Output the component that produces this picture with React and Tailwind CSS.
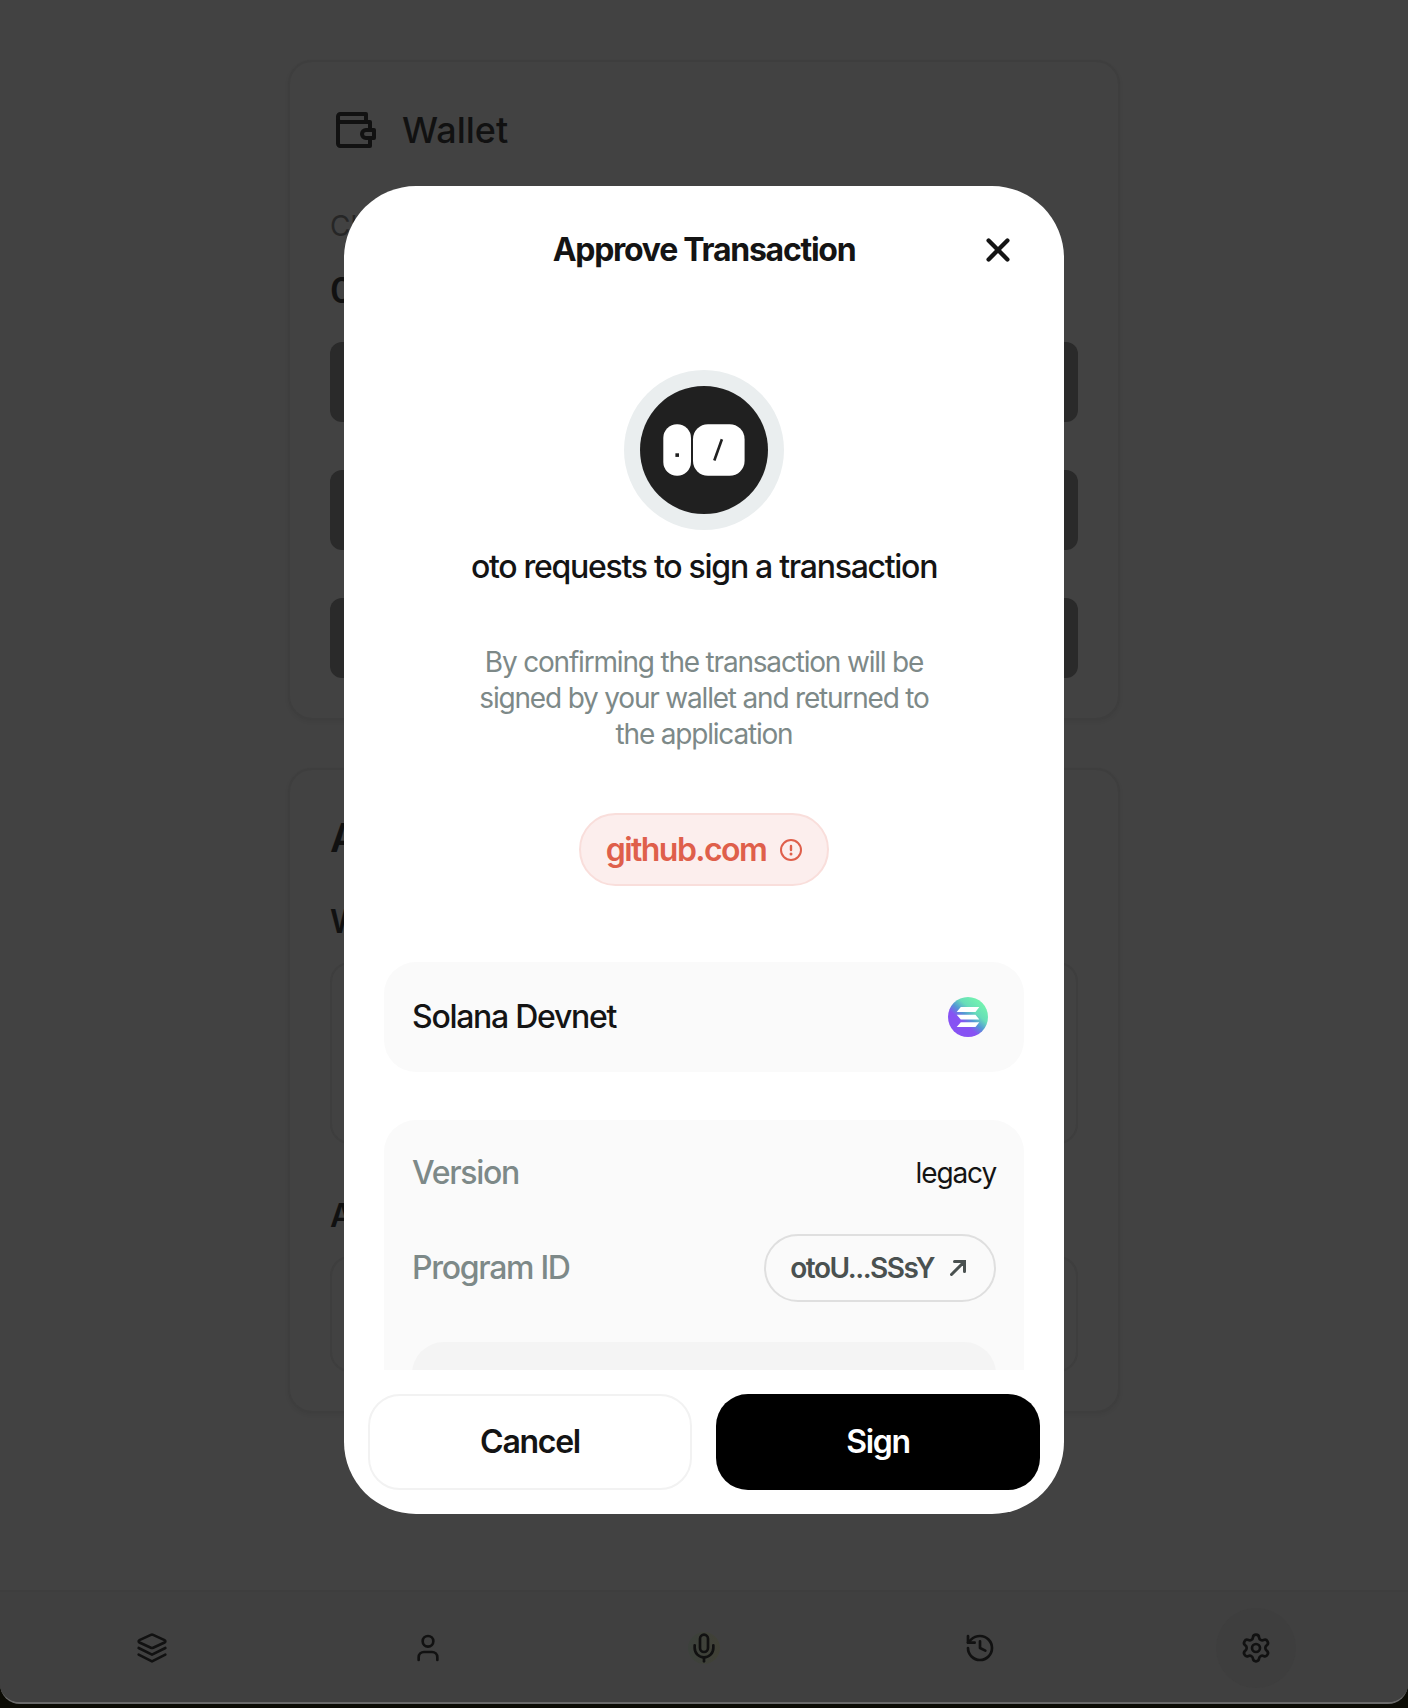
import { User, Mic, History, Settings } from "lucide-react";

function WalletIcon() {
  return (
    <svg width="48" height="48" viewBox="0 0 24 24" fill="none" stroke="currentColor" strokeWidth="2" strokeLinejoin="round">
      <path d="M18 8V4H5.200A1.200 1.200 0 0 0 4 5.200V18.800A1.200 1.200 0 0 0 5.200 20H20V16" />
      <path d="M4 6.800A1.200 1.200 0 0 0 5.200 8H20V12" />
      <path d="M18 12H22V16H18A2 2 0 0 1 18 12Z" />
    </svg>
  );
}

function StackIcon() {
  return (
    <svg width="32" height="32" viewBox="0 0 24 24" fill="none" stroke="currentColor" strokeWidth="2" strokeLinecap="round" strokeLinejoin="round">
      <path d="M12.830 2.180a2 2 0 0 0-1.660 0L2.600 6.080a1 1 0 0 0 0 1.830l8.580 3.910a2 2 0 0 0 1.660 0l8.580-3.900a1 1 0 0 0 0-1.830Z" />
      <path d="M2 12l10 5 10-5" />
      <path d="M2 17l10 5 10-5" />
    </svg>
  );
}

function AlertIcon() {
  return (
    <svg width="24" height="24" viewBox="0 0 24 24" fill="none" stroke="currentColor" strokeWidth="2">
      <circle cx="12" cy="12" r="10" />
      <path d="M12 8v4" strokeWidth="2.400" strokeLinecap="round" />
      <circle cx="12" cy="16" r="1.500" fill="currentColor" stroke="none" />
    </svg>
  );
}

function SolanaIcon() {
  return (
    <svg width="40" height="40" viewBox="0 0 40 40">
      <defs>
        <linearGradient id="sol" x1="8" y1="34" x2="32" y2="6" gradientUnits="userSpaceOnUse">
          <stop offset="0.080" stopColor="#8752F3" />
          <stop offset="0.300" stopColor="#8752F3" />
          <stop offset="0.500" stopColor="#5497D5" />
          <stop offset="0.720" stopColor="#68DDB9" />
          <stop offset="1" stopColor="#72F0B0" />
        </linearGradient>
      </defs>
      <circle cx="20" cy="20" r="20" fill="url(#sol)" />
      <g fill="#fff">
        <path d="M12.800 10.100H31.300L27.500 15H8.700Z" />
        <path d="M8.700 17.700H27.500L31.300 22.600H12.800Z" />
        <path d="M12.800 25.200H31.300L27.500 30.100H8.700Z" />
      </g>
    </svg>
  );
}

function Backdrop() {
  return (
    <div className="flex h-[1590px] flex-col gap-12 px-[288px] pt-[60px] text-[#111]">
      <section className="h-[660px] rounded-3xl border-2 border-[#3e3e3e] px-10 pt-[44px] shadow-[0_2px_4px_rgba(0,0,0,0.05)]">
        <div className="flex items-center gap-6">
          <WalletIcon />
          <h2 className="text-[36px] leading-[48px] font-medium">Wallet</h2>
        </div>
        <p className="mt-[52px] text-[28px] leading-10 text-[#262626]">Cluster</p>
        <p className="mt-5 text-[36px] leading-[48px] font-semibold">0 SOL</p>
        <div className="mt-[28px] flex flex-col gap-12">
          <div className="h-20 rounded-xl bg-[#2a2a2a]" />
          <div className="h-20 rounded-xl bg-[#2a2a2a]" />
          <div className="h-20 rounded-xl bg-[#2a2a2a]" />
        </div>
      </section>
      <section className="h-[645px] rounded-3xl border-2 border-[#3e3e3e] px-10 pt-[44px] shadow-[0_2px_4px_rgba(0,0,0,0.05)]">
        <h2 className="text-[40px] leading-[48px] font-semibold">Account</h2>
        <p className="mt-[40px] text-[32px] leading-10 font-semibold">Wallet</p>
        <div className="mt-[20px] h-[182px] rounded-[20px] border-2 border-[#3e3e3e]" />
        <p className="mt-[52px] text-[32px] leading-10 font-semibold">Address</p>
        <div className="mt-[20px] h-[116px] rounded-[20px] border-2 border-[#3e3e3e]" />
      </section>
    </div>
  );
}

function NavBar() {
  return (
    <nav className="grid h-[112px] grid-cols-5 items-center border-t-2 border-[#3e3e3e] bg-[#404040] px-[14px] pt-[2px] text-[#111]">
      <div className="flex justify-center"><StackIcon /></div>
      <div className="flex justify-center"><User size={32} /></div>
      <div className="flex justify-center">
        <span className="rounded-full bg-linear-to-r from-[#3c413c] to-[#41412f]/60"><Mic size={32} /></span>
      </div>
      <div className="flex justify-center"><History size={32} /></div>
      <div className="flex justify-center">
        <span className="flex size-20 items-center justify-center rounded-full bg-[#3e3e3e]"><Settings size={32} /></span>
      </div>
    </nav>
  );
}

function Dialog() {
  return (
    <div className="absolute left-[344px] top-[186px] flex h-[1328px] w-[720px] flex-col overflow-hidden rounded-[72px] bg-white text-[#141414]">
      <header className="grid h-32 shrink-0 grid-cols-[120px_1fr_120px] items-center">
        <h1 className="col-start-2 text-center text-[32px] leading-10 font-bold tracking-[-1.260px]">Approve Transaction</h1>
        <svg className="ml-[42px]" width="24" height="24" viewBox="0 0 24 24" fill="none" stroke="currentColor" strokeWidth="4.300" strokeLinecap="round">
          <path d="M2.600 2.600l18.800 18.800M21.400 2.600L2.600 21.400" />
        </svg>
      </header>
      <main className="flex min-h-0 flex-1 flex-col overflow-hidden px-10 pt-14">
        <div className="flex size-40 shrink-0 items-center justify-center self-center rounded-full bg-[#eaeeef]">
          <div className="flex size-32 items-center justify-center rounded-full bg-[#202020]">
            <svg width="82" height="54" viewBox="0 0 82 54">
              <rect x="0.300" y="1.200" width="27.700" height="51.600" rx="13.700" fill="#fff" />
              <rect x="30" y="1.200" width="51.600" height="51.600" rx="15" fill="#fff" />
              <rect x="12.400" y="30.300" width="3.600" height="3.600" fill="#202020" />
              <path d="M51.300 37.500L58.900 16.300" stroke="#202020" strokeWidth="2.600" />
            </svg>
          </div>
        </div>
        <h2 className="mt-4 text-center text-[32px] leading-[42px] font-medium tracking-[-1.280px]">oto requests to sign a transaction</h2>
        <p className="mx-auto mt-[56px] w-[480px] text-center text-[28px] leading-9 tracking-[-1.190px] text-[#7d8988]">
          By confirming the transaction will be signed by your wallet and returned to the application
        </p>
        <div className="mt-[61px] flex h-[73px] shrink-0 items-center gap-[13px] self-center rounded-full border-2 border-[#f9dedb] bg-[#fceeed] pr-6 pl-[25px] text-[#df5f4b]">
          <span className="text-[32px] leading-10 font-semibold tracking-[-1.540px]">github.com</span>
          <AlertIcon />
        </div>
        <div className="mt-[76px] flex h-[110px] shrink-0 items-center justify-between rounded-[32px] bg-[#fafafa] pr-9 pl-7">
          <span className="text-[32px] leading-10 font-medium tracking-[-1.280px]">Solana Devnet</span>
          <SolanaIcon />
        </div>
        <div className="mt-12 h-[400px] shrink-0 rounded-[32px] bg-[#fafafa] px-7 pt-[33px]">
          <div className="flex h-10 items-center justify-between">
            <span className="text-[32px] leading-10 font-medium tracking-[-1.280px] text-[#7d8988]">Version</span>
            <span className="text-[28px] leading-10 tracking-[-1.120px]">legacy</span>
          </div>
          <div className="mt-[41px] flex h-[68px] items-center justify-between">
            <span className="text-[32px] leading-10 font-medium tracking-[-1.300px] text-[#7d8988]">Program ID</span>
            <div className="flex h-[68px] items-center gap-4 rounded-full border-2 border-[#dfdfdf] pr-7 pl-6 text-[#4a5150]">
              <span className="text-[28px] leading-9 font-semibold tracking-[-1.460px]">otoU...SSsY</span>
              <svg width="16" height="16" viewBox="0 0 16 16" fill="none" stroke="currentColor" strokeWidth="3" strokeLinecap="round">
                <path d="M1.500 14.500L14 2M4.500 1.500h10v10" />
              </svg>
            </div>
          </div>
          <div className="mt-10 h-40 rounded-[32px] bg-[#f4f4f4]" />
        </div>
      </main>
      <footer className="grid h-36 shrink-0 grid-cols-2 gap-6 p-6 text-[32px] font-semibold tracking-[-1.280px]">
        <button className="rounded-[32px] border-2 border-[#f2f2f2]">Cancel</button>
        <button className="rounded-[32px] bg-black text-white">Sign</button>
      </footer>
    </div>
  );
}

export default function App() {
  return (
    <div className="relative h-[1708px] w-[1408px] overflow-hidden bg-[#0b0b04] font-['Inter',sans-serif]">
      <div className="h-[1704px] overflow-hidden rounded-b-[20px] border-b-2 border-[#6a6a6a] bg-[#424242]">
        <Backdrop />
        <NavBar />
      </div>
      <Dialog />
    </div>
  );
}
